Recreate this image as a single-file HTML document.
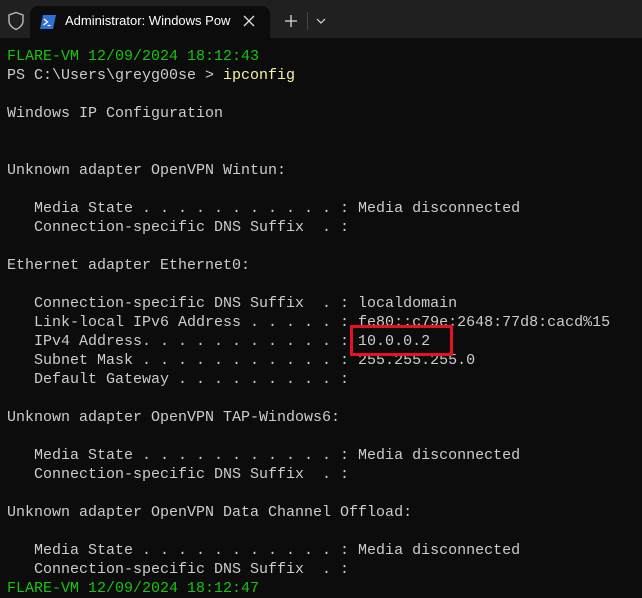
<!DOCTYPE html>
<html><head><style>
html,body{margin:0;padding:0;width:642px;height:598px;overflow:hidden;background:#0c0c0c;}
.bar{position:absolute;left:0;top:0;width:642px;height:38px;background:#202020;}
.tab{position:absolute;left:30px;top:6px;width:240px;height:32px;background:#0c0c0c;border-radius:8px 8px 0 0;}
.tt{position:absolute;left:65px;top:13px;font:13px "Liberation Sans",sans-serif;color:#fff;white-space:nowrap;width:166px;overflow:hidden;}
pre{position:absolute;left:7px;top:47px;margin:0;font:15px/19px "Liberation Mono",monospace;color:#cccccc;}
.g{color:#16c60c}.y{color:#f9f1a5}
.box{position:absolute;left:350px;top:325px;width:97px;height:25px;border:3px solid #e81123;}
</style></head><body>
<div class="bar"></div>
<svg style="position:absolute;left:7px;top:11px" width="18" height="20" viewBox="0 0 18 20"><path d="M9 1.5 L16 4 V10 C16 14 12.5 17 9 18.5 C5.5 17 2 14 2 10 V4 Z" fill="none" stroke="#bbb" stroke-width="1.4"/></svg>
<div class="tab"></div>
<svg style="position:absolute;left:40px;top:15px" width="16" height="14" viewBox="0 0 16 14"><path d="M3 0 H16 L13 14 H0 Z" fill="#2f6fd6"/><path d="M4 4 L7.5 7 L3.5 10" stroke="#fff" stroke-width="1.3" fill="none"/><path d="M7.5 10.5 H10.5" stroke="#fff" stroke-width="1.2"/></svg>
<div class="tt">Administrator: Windows PowerShell</div>
<svg style="position:absolute;left:243px;top:15px" width="12" height="12" viewBox="0 0 12 12"><path d="M1 1 L11 11 M11 1 L1 11" stroke="#ddd" stroke-width="1.3"/></svg>
<svg style="position:absolute;left:285px;top:15px" width="12" height="12" viewBox="0 0 12 12"><path d="M6 0 V12 M0 6 H12" stroke="#ddd" stroke-width="1.3"/></svg>
<div style="position:absolute;left:307px;top:12px;width:1px;height:18px;background:#444"></div>
<svg style="position:absolute;left:316px;top:18px" width="10" height="6" viewBox="0 0 10 6"><path d="M1 1 L5 5 L9 1" stroke="#ddd" stroke-width="1.2" fill="none"/></svg>
<pre><span class="g">FLARE-VM 12/09/2024 18:12:43</span>
PS C:\Users\greyg00se &gt; <span class="y">ipconfig</span>

Windows IP Configuration


Unknown adapter OpenVPN Wintun:

   Media State . . . . . . . . . . . : Media disconnected
   Connection-specific DNS Suffix  . :

Ethernet adapter Ethernet0:

   Connection-specific DNS Suffix  . : localdomain
   Link-local IPv6 Address . . . . . : fe80::c79e:2648:77d8:cacd%15
   IPv4 Address. . . . . . . . . . . : 10.0.0.2
   Subnet Mask . . . . . . . . . . . : 255.255.255.0
   Default Gateway . . . . . . . . . :

Unknown adapter OpenVPN TAP-Windows6:

   Media State . . . . . . . . . . . : Media disconnected
   Connection-specific DNS Suffix  . :

Unknown adapter OpenVPN Data Channel Offload:

   Media State . . . . . . . . . . . : Media disconnected
   Connection-specific DNS Suffix  . :
<span class="g">FLARE-VM 12/09/2024 18:12:47</span></pre>
<div class="box"></div>
</body></html>
